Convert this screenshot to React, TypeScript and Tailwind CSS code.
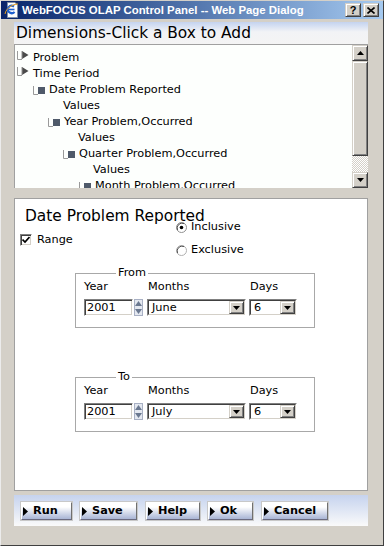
import React from "react";

const tb =
  "bg-[#d4d0c8] border border-t-[#d4d0c8] border-l-[#d4d0c8] border-r-[#404040] border-b-[#404040] shadow-[inset_1px_1px_#ffffff,inset_-1px_-1px_#808080]";

function TreeTri() {
  return (
    <svg width="12" height="16" viewBox="0 0 12 16" className="shrink-0">
      <path d="M0.5 1V9.5H5" stroke="#9a9a9a" fill="none" />
      <polygon points="5,1 11.5,5 5,9" fill="#4a4a4a" />
      <polyline points="5,1 5,9" stroke="#909090" fill="none" />
    </svg>
  );
}

function TreeSq() {
  return (
    <svg width="12" height="16" viewBox="0 0 12 16" className="shrink-0">
      <path d="M0.5 4V12.5H5" stroke="#9a9a9a" fill="none" />
      <rect x="5" y="5" width="7" height="7" fill="#4f5a6a" />
    </svg>
  );
}

function Row({ pad, icon, text }: { pad: string; icon?: "tri" | "sq"; text: string }) {
  return (
    <div className={"h-[16px] flex items-center whitespace-nowrap " + pad}>
      {icon === "tri" && <TreeTri />}
      {icon === "sq" && <TreeSq />}
      <span className={icon ? "ml-[4px]" : ""}>{text}</span>
    </div>
  );
}

function Arrow({ dir }: { dir: "up" | "down" }) {
  return (
    <svg width="7" height="4" viewBox="0 0 7 4">
      {dir === "up" ? <polygon points="3.5,0 7,4 0,4" fill="#000" /> : <polygon points="0,0 7,0 3.5,4" fill="#000" />}
    </svg>
  );
}

function Select({ w, value }: { w: string; value: string }) {
  return (
    <div className={"h-[17px] flex border border-t-[#808080] border-l-[#808080] border-r-[#ffffff] border-b-[#ffffff] " + w}>
      <div className="flex-1 flex items-stretch bg-white border border-t-[#404040] border-l-[#404040] border-r-[#d4d0c8] border-b-[#d4d0c8]">
        <span className="flex-1 pl-[3px] leading-[13px]">{value}</span>
        <div className={"w-[15px] flex items-center justify-center " + tb}>
          <Arrow dir="down" />
        </div>
      </div>
    </div>
  );
}

function Spinner() {
  return (
    <svg width="9" height="17" viewBox="0 0 9 17" className="ml-[1px] shrink-0">
      <rect x="0.5" y="0.5" width="8" height="16" fill="#e4e8f0" stroke="#a8b0c4" />
      <polygon points="4.5,2 8,7 1,7" fill="#6a7890" />
      <polygon points="1,10 8,10 4.5,15" fill="#6a7890" />
    </svg>
  );
}

function DateSet({ legend, month }: { legend: string; month: string }) {
  return (
    <fieldset className="ml-[60px] w-[240px] border border-[#a8a8a8] p-0 m-0">
      <legend className="ml-[40px] px-[2px] leading-[14px]">{legend}</legend>
      <div className="flex pl-[8px] pb-[11px]">
        <div className="w-[63px] flex flex-col">
          <span className="leading-[13px]">Year</span>
          <div className="mt-[6px] flex">
            <div className="w-[49px] h-[17px] border border-t-[#808080] border-l-[#808080] border-r-[#ffffff] border-b-[#ffffff] shadow-[inset_1px_1px_#404040,inset_-1px_-1px_#d4d0c8] bg-white pl-[2px] leading-[15px]">
              2001
            </div>
            <Spinner />
          </div>
        </div>
        <div className="w-[102px] flex flex-col">
          <span className="leading-[13px] pl-[1px]">Months</span>
          <div className="mt-[6px]">
            <Select w="w-[99px]" value={month} />
          </div>
        </div>
        <div className="w-[48px] flex flex-col">
          <span className="leading-[13px] pl-[1px]">Days</span>
          <div className="mt-[6px]">
            <Select w="w-[48px]" value="6" />
          </div>
        </div>
      </div>
    </fieldset>
  );
}

function Btn({ label, w, ml }: { label: string; w: string; ml: string }) {
  return (
    <div
      className={
        "h-[18px] flex items-center border border-t-[#ffffff] border-l-[#ffffff] border-r-[#707070] border-b-[#6a6a80] bg-linear-to-b from-[#ffffff] from-25% to-[#a9b5d5] shadow-[0_0_0_1px_#c8c8c8] " +
        w +
        " " +
        ml
      }
    >
      <svg width="5" height="9" viewBox="0 0 5 9" className="ml-[1px] shrink-0">
        <polygon points="0,0 5,4.5 0,9" fill="#000" />
      </svg>
      <span className="ml-[5px] font-['DejaVu_Sans',sans-serif] font-bold text-[11.3px] leading-[12px]">{label}</span>
    </div>
  );
}

export default function App() {
  return (
    <div className="w-[384px] h-[546px] bg-[#d4d0c8] flex flex-col border border-t-[#d4d0c8] border-l-[#ececec] border-r-[#404040] border-b-[#404040] overflow-hidden font-['DejaVu_Sans',sans-serif] text-[11.3px] text-black">
      {/* title bar */}
      <div className="h-[18px] shrink-0 flex items-center bg-linear-to-r from-[#0a246a] to-[#a6caf0]">
        <svg width="16" height="16" viewBox="0 0 16 16" className="ml-[3px] shrink-0">
          <path d="M3.5 0.5H11L13.5 3V15.5H3.5Z" fill="#fff" stroke="#8090a8" />
          <path d="M10 4.5A4 3.6 0 1 0 10.6 10" stroke="#1e60d0" strokeWidth="2.2" fill="none" />
          <path d="M4 7.5H10.5" stroke="#1e60d0" strokeWidth="1.6" />
          <path d="M1 12C2 6 9 2 14 2" stroke="#e8a020" strokeWidth="1" fill="none" />
        </svg>
        <span className="ml-[2px] text-white font-bold font-['Liberation_Sans',sans-serif] text-[11.4px] leading-[13px] whitespace-nowrap">
          WebFOCUS OLAP Control Panel -- Web Page Dialog
        </span>
        <div className="ml-auto mr-[4px] flex gap-[2px]">
          <div className={"w-[16px] h-[14px] flex items-center justify-center " + tb}>
            <span className="font-bold font-['Liberation_Sans',sans-serif] text-[11px] leading-[11px]">?</span>
          </div>
          <div className={"w-[16px] h-[14px] flex items-center justify-center " + tb}>
            <svg width="8" height="7" viewBox="0 0 8 7">
              <path d="M0.5 0.5L7.5 6.5M7.5 0.5L0.5 6.5" stroke="#000" strokeWidth="1.6" />
            </svg>
          </div>
        </div>
      </div>

      <div className="ml-[13px] w-[354px] mt-[3px] flex flex-col">
        {/* heading band */}
        <div className="h-[23px] bg-linear-to-b from-[#c4d3ef] from-0% via-[#f2f3f6] via-45% to-[#f4f4f4] flex items-center pl-[2px] text-[15.4px] leading-[18px] whitespace-nowrap border-b border-[#a0a0a0]">
          Dimensions-Click a Box to Add
        </div>

        {/* tree box */}
        <div className="h-[143px] flex border-l border-[#a0a0a0] bg-[#fdfffd]">
          <div className="flex-1 overflow-hidden pt-[5px]">
            <Row pad="pl-[2px]" icon="tri" text="Problem" />
            <Row pad="pl-[2px]" icon="tri" text="Time Period" />
            <Row pad="pl-[18px]" icon="sq" text="Date Problem Reported" />
            <Row pad="pl-[48px]" text="Values" />
            <Row pad="pl-[33px]" icon="sq" text="Year Problem,Occurred" />
            <Row pad="pl-[63px]" text="Values" />
            <Row pad="pl-[48px]" icon="sq" text="Quarter Problem,Occurred" />
            <Row pad="pl-[78px]" text="Values" />
            <Row pad="pl-[64px]" icon="sq" text="Month Problem,Occurred" />
          </div>
          <div className="w-[16px] flex flex-col">
            <div className={"h-[16px] flex items-center justify-center " + tb}>
              <Arrow dir="up" />
            </div>
            <div className={"h-[95px] " + tb}></div>
            <div className="flex-1 bg-[repeating-conic-gradient(#d4d0c8_0_25%,#ffffff_0_50%)] bg-[length:2px_2px]"></div>
            <div className={"h-[16px] flex items-center justify-center " + tb}>
              <Arrow dir="down" />
            </div>
          </div>
        </div>

        {/* date panel */}
        <div className="mt-[10px] h-[293px] border border-[#a0a0a0] bg-white flex flex-col">
          <div className="pt-[8px] pl-[10px] text-[15.4px] leading-[18px] whitespace-nowrap">Date Problem Reported</div>
          <div className="flex -mt-[5px]">
            <div className="w-[161px] pl-[5px] pt-[13px]">
              <div className="h-[14px] flex items-center">
                <div className="w-[12px] h-[12px] border border-t-[#808080] border-l-[#808080] border-r-[#ffffff] border-b-[#ffffff] shadow-[inset_1px_1px_#404040,inset_-1px_-1px_#d4d0c8] bg-white flex items-center justify-center">
                  <svg width="8" height="8" viewBox="0 0 8 8">
                    <path d="M0.5 3.5L3 6L7.5 1" stroke="#000" strokeWidth="1.7" fill="none" />
                  </svg>
                </div>
                <span className="ml-[5px]">Range</span>
              </div>
            </div>
            <div className="flex flex-col">
              <div className="h-[14px] flex items-center">
                <svg width="11" height="11" viewBox="0 0 11 11" className="shrink-0">
                  <circle cx="5.5" cy="5.5" r="5" fill="#fff" stroke="#909090" />
                  <path d="M1.5 8A5 5 0 0 1 8 1.5" stroke="#505050" fill="none" />
                  <circle cx="5.5" cy="5.5" r="1.8" fill="#000" />
                </svg>
                <span className="ml-[4px]">Inclusive</span>
              </div>
              <div className="h-[14px] mt-[9px] flex items-center">
                <svg width="11" height="11" viewBox="0 0 11 11" className="shrink-0">
                  <circle cx="5.5" cy="5.5" r="5" fill="#fff" stroke="#b0b0b0" />
                  <path d="M1.5 8A5 5 0 0 1 8 1.5" stroke="#505050" fill="none" />
                </svg>
                <span className="ml-[4px]">Exclusive</span>
              </div>
            </div>
          </div>
          <div className="mt-[9px]">
            <DateSet legend="From" month="June" />
          </div>
          <div className="mt-[42px]">
            <DateSet legend="To" month="July" />
          </div>
        </div>

        {/* button band */}
        <div className="mt-[4px] h-[31px] bg-linear-to-b from-[#c6d3ee] to-[#fafafa] flex items-start pt-[7px]">
          <Btn label="Run" w="w-[51px]" ml="ml-[7px]" />
          <Btn label="Save" w="w-[57px]" ml="ml-[8px]" />
          <Btn label="Help" w="w-[54px]" ml="ml-[9px]" />
          <Btn label="Ok" w="w-[45px]" ml="ml-[8px]" />
          <Btn label="Cancel" w="w-[66px]" ml="ml-[9px]" />
        </div>
      </div>
    </div>
  );
}
